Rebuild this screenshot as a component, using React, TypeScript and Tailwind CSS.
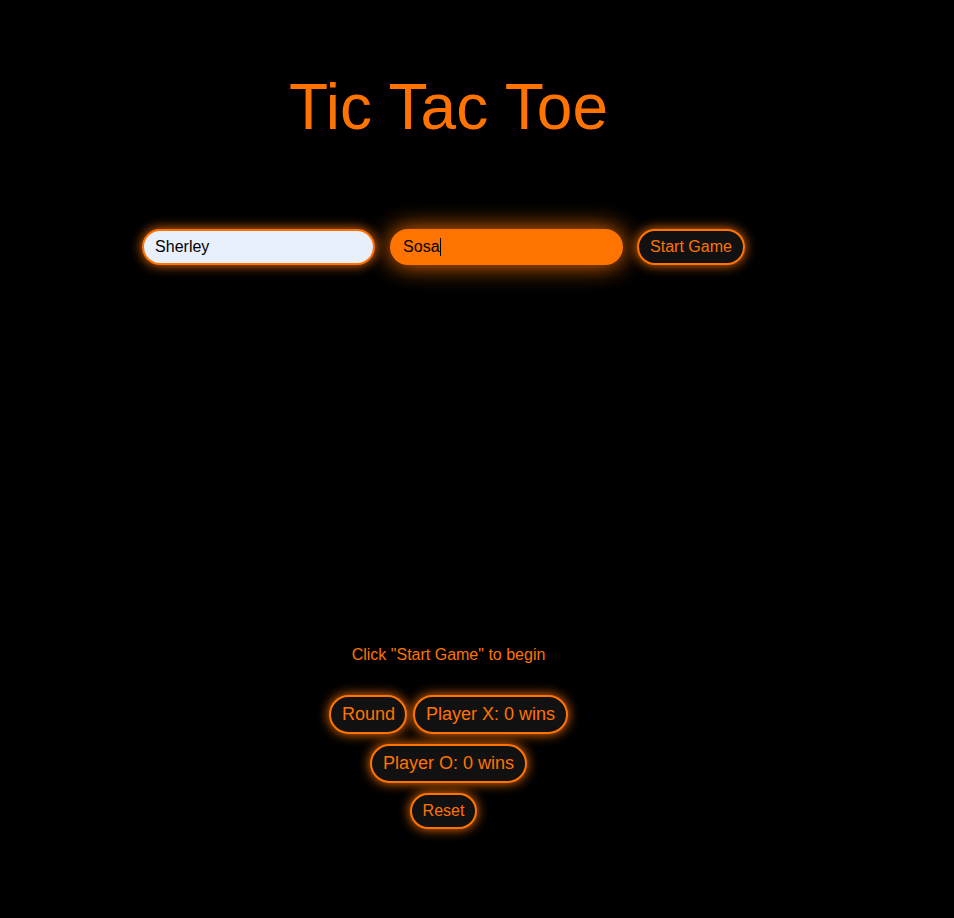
const font = { fontFamily: '"Liberation Sans", Arial, sans-serif' };

function Pill({ children, big }: { children: React.ReactNode; big?: boolean }) {
  return (
    <div
      className={
        "flex items-center rounded-full border-2 border-[#ff7300] bg-[#111111] text-[#ff7300] shadow-[0_0_12px_#ff7300] " +
        (big ? "h-[39px] px-[10.5px] text-[18px]" : "h-9 px-[11px] text-base")
      }
    >
      {children}
    </div>
  );
}

export default function App() {
  return (
    <main className="min-h-screen w-full bg-black" style={font}>
      <div className="flex w-[897px] flex-col items-center">
        <h1 className="mt-[75px] h-16 text-[64px] leading-none text-[#ff7300]">Tic Tac Toe</h1>

        <div className="mt-[90px] mr-[10px] flex items-center">
          <div className="flex h-9 w-[233px] items-center rounded-full border-2 border-[#ff7300] bg-[#e8f0fe] pl-[11px] text-base text-black shadow-[0_0_12px_#ff7300]">
            Sherley
          </div>
          <div className="ml-[15px] flex h-9 w-[233px] items-center rounded-full bg-[#ff7300] pl-[13px] text-base text-black shadow-[0_0_24px_#ff7300]">
            Sosa<span className="inline-block h-[18px] w-px bg-black" />
          </div>
          <div className="ml-[14px] flex h-9 items-center rounded-full border-2 border-[#ff7300] bg-[#111111] px-[11px] text-base text-[#ff7300] shadow-[0_0_12px_#ff7300]">
            Start Game
          </div>
        </div>

        <p className="mt-[382px] h-4 text-base leading-none text-[#ff7300]">Click "Start Game" to begin</p>

        <div className="mt-[32px] flex gap-[6px]">
          <Pill big>Round</Pill>
          <Pill big>Player X: 0 wins</Pill>
        </div>
        <div className="mt-[10px] flex">
          <Pill big>Player O: 0 wins</Pill>
        </div>
        <div className="mt-[10px] mr-[10px] flex">
          <Pill>Reset</Pill>
        </div>
      </div>
    </main>
  );
}
